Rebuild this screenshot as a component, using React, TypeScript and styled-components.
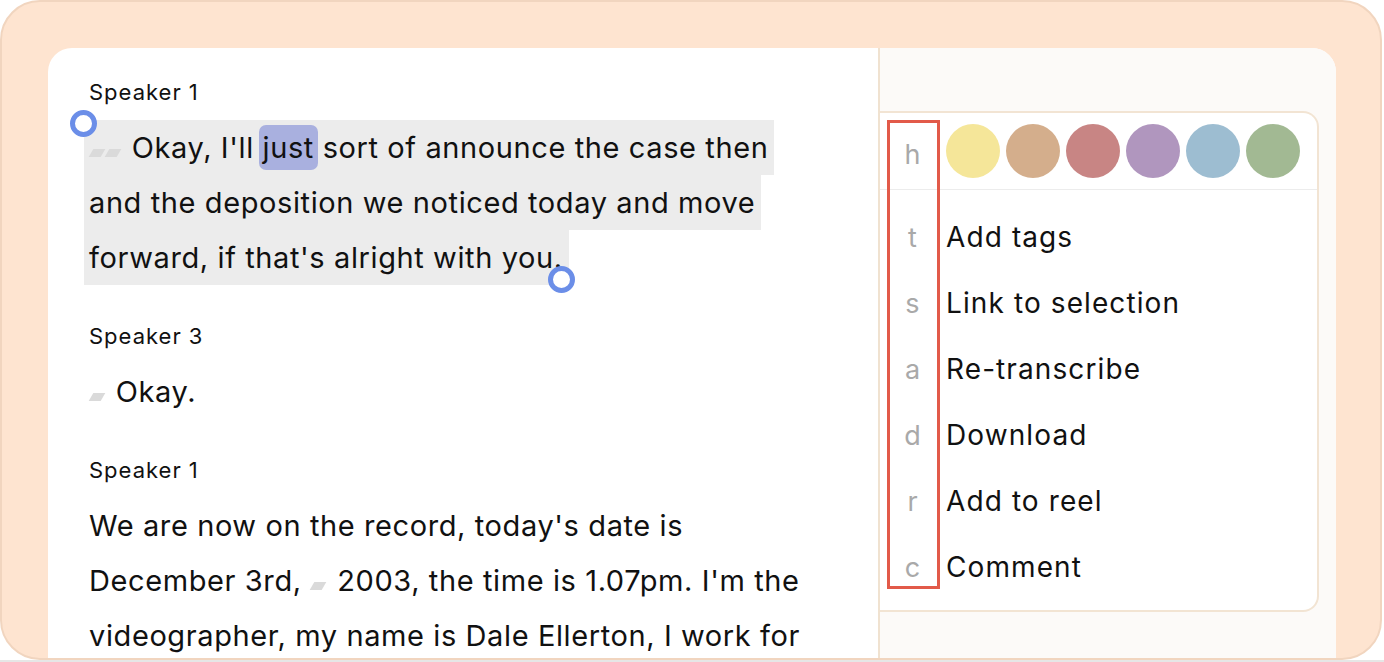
import React from "react";
import styled, { createGlobalStyle } from "styled-components";

const GlobalStyle = createGlobalStyle`
  html, body { margin: 0; padding: 0; background: #ffffff; }
  body { font-family: Inter, "Noto Sans", sans-serif; -webkit-font-smoothing: antialiased; }
  * { box-sizing: border-box; }
`;

const Page = styled.div`
  width: 1384px;
  height: 662px;
  display: flex;
  flex-direction: column;
  overflow: hidden;
`;

const Frame = styled.div`
  width: 1382px;
  height: 660px;
  border: 2px solid #f1d5bf;
  border-radius: 40px;
  background: #fee4d0;
  padding: 46px 44px 0 46px;
  overflow: hidden;
`;

const BottomStrip = styled.div`
  height: 2px;
  background: #e6e6e6;
`;

const Card = styled.div`
  display: flex;
  height: 100%;
  background: #ffffff;
  border-radius: 24px 24px 0 0;
  overflow: hidden;
`;

const Transcript = styled.div`
  position: relative;
  width: 830px;
  flex: none;
  padding: 29px 64px 0 41px;
  color: #111111;
`;

const Block = styled.section`
  & + & { margin-top: 36px; }
`;

const SpeakerName = styled.div`
  font-size: 22px;
  line-height: 30px;
  letter-spacing: 1px;
  margin-bottom: 13px;
  color: #111;
`;

const Para = styled.p`
  margin: 0;
  font-size: 29px;
  line-height: 55px;
  letter-spacing: 0.6px;
`;

const Selected = styled.span`
  background: #ececec;
  padding: 10px 6px 10px 5px;
  margin-left: -5px;
  box-decoration-break: clone;
  -webkit-box-decoration-break: clone;
`;

const Word = styled.span`
  background: #a9b0df;
  border-radius: 7px;
  padding: 5px 4px;
  margin: 0 -4px;
`;

const Marker = styled.span<{ $gap?: number }>`
  display: inline-block;
  width: 12px;
  height: 8px;
  margin-left: 2px;
  margin-right: ${(p) => p.$gap ?? 2}px;
  background: #dadada;
  transform: skewX(-30deg);
  vertical-align: 1px;
`;

const Handle = styled.span`
  position: absolute;
  width: 27px;
  height: 27px;
  border-radius: 50%;
  border: 5px solid #6b8ee8;
  background: #ffffff;
`;

const Side = styled.aside`
  flex: 1;
  background: #fcfaf8;
  border-left: 2px solid #f0e2d0;
  padding: 63px 17px 0 0;
`;

const Menu = styled.div`
  position: relative;
  background: #ffffff;
  border: 2px solid #f2e4d3;
  border-left: none;
  border-radius: 0 16px 16px 0;
`;

const SwatchRow = styled.div`
  display: grid;
  grid-template-columns: 66px 1fr;
  align-items: center;
  padding: 11px 0 11px;
  border-bottom: 1.5px solid #ececec;
`;

const Swatches = styled.div`
  display: flex;
  gap: 6px;
`;

const Swatch = styled.span<{ $c: string }>`
  width: 54px;
  height: 54px;
  border-radius: 50%;
  background: ${(p) => p.$c};
`;

const Items = styled.ul`
  list-style: none;
  margin: 0;
  padding: 14px 0 10px;
`;

const Item = styled.li`
  display: grid;
  grid-template-columns: 66px 1fr;
  align-items: center;
  height: 66px;
  font-size: 28px;
  letter-spacing: 1.1px;
  color: #111111;
`;

const Key = styled.span<{ $drop?: number }>`
  text-align: center;
  font-size: 27px;
  letter-spacing: 0;
  color: #a9a9a9;
  padding-right: 1px;
  padding-top: ${(p) => p.$drop ?? 0}px;
`;

const KeyOutline = styled.div`
  position: absolute;
  left: 7px;
  top: 7px;
  width: 53px;
  height: 469px;
  border: 3px solid #e25a49;
  pointer-events: none;
`;

const swatches = ["#f5e699", "#d4ae8c", "#c88584", "#b096be", "#9dbdd1", "#a2b993"];

const actions: [string, string][] = [
  ["t", "Add tags"],
  ["s", "Link to selection"],
  ["a", "Re-transcribe"],
  ["d", "Download"],
  ["r", "Add to reel"],
  ["c", "Comment"],
];

export default function App() {
  return (
    <Page>
      <GlobalStyle />
      <Frame>
        <Card>
          <Transcript>
            <Block>
              <SpeakerName>Speaker 1</SpeakerName>
              <Para>
                <Selected>
                  <Marker />
                  <Marker $gap={4} /> Okay, I'll <Word>just</Word> sort of announce the case then and
                  the deposition we noticed today and move forward, if that's alright with you.
                </Selected>
              </Para>
            </Block>
            <Block>
              <SpeakerName>Speaker 3</SpeakerName>
              <Para>
                <Marker $gap={4} /> Okay.
              </Para>
            </Block>
            <Block>
              <SpeakerName>Speaker 1</SpeakerName>
              <Para>
                We are now on the record, today's date is December 3rd, <Marker $gap={4} /> 2003,
                the time is 1.07pm. I'm the videographer, my name is Dale Ellerton, I work for
              </Para>
            </Block>
            <Handle style={{ left: 22, top: 62 }} />
            <Handle style={{ left: 500, top: 218 }} />
          </Transcript>
          <Side>
            <Menu>
              <SwatchRow>
                <Key $drop={6}>h</Key>
                <Swatches>
                  {swatches.map((c) => (
                    <Swatch key={c} $c={c} />
                  ))}
                </Swatches>
              </SwatchRow>
              <Items>
                {actions.map(([k, label]) => (
                  <Item key={k}>
                    <Key>{k}</Key>
                    <span>{label}</span>
                  </Item>
                ))}
              </Items>
              <KeyOutline />
            </Menu>
          </Side>
        </Card>
      </Frame>
      <BottomStrip />
    </Page>
  );
}
